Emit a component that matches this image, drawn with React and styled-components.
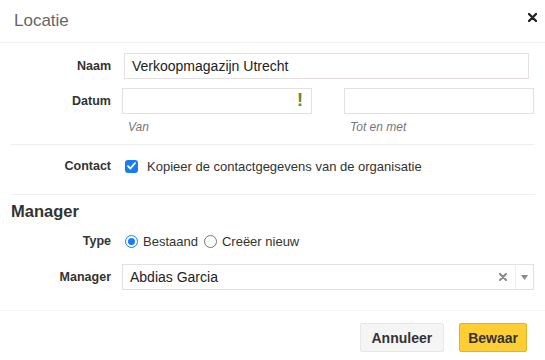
import React from "react";
import styled, { createGlobalStyle } from "styled-components";

const Global = createGlobalStyle`
  html, body { margin: 0; padding: 0; background: #fff; }
  body { font-family: "Liberation Sans", Arial, sans-serif; color: #333; }
  * { box-sizing: border-box; }
`;

const Modal = styled.div`
  width: 545px;
  height: 360px;
  background: #fff;
  display: flex;
  flex-direction: column;
`;

const Header = styled.div`
  height: 43px;
  border-bottom: 1px solid #f3f3f3;
  display: flex;
  align-items: center;
  justify-content: space-between;
  padding: 0 7px 0 14px;
`;

const Title = styled.h1`
  margin: 0;
  font-size: 17px;
  font-weight: normal;
  color: #666;
`;

const Close = styled.button`
  border: 0;
  background: none;
  padding: 0;
  width: 12px;
  height: 12px;
  margin-bottom: 7px;
  display: flex;
  align-items: center;
  justify-content: center;
  cursor: pointer;
`;

const Body = styled.div`
  padding: 10px 10px 0 11px;
  display: flex;
  flex-direction: column;
`;

const Row = styled.div`
  display: grid;
  grid-template-columns: 100px 1fr;
  column-gap: 11px;
  align-items: ${(p) => p.$align || "center"};
  margin-top: ${(p) => p.$mt || 0}px;
`;

const Label = styled.label`
  text-align: right;
  font-size: 12.5px;
  font-weight: bold;
  color: #333;
  line-height: ${(p) => p.$lh || 20}px;
`;

const TextInput = styled.div`
  height: 26px;
  border: 1px solid #e6e0e3;
  background: #fff;
  font-size: 14px;
  color: #222;
  display: flex;
  align-items: center;
  padding-left: ${(p) => p.$pl || 7}px;
  margin: ${(p) => p.$margin || "0"};
  position: relative;
`;

const DateGrid = styled.div`
  display: grid;
  grid-template-columns: 190px 190px;
  column-gap: 32px;
`;

const DateCol = styled.div`
  display: flex;
  flex-direction: column;
`;

const Help = styled.span`
  font-size: 12px;
  font-style: italic;
  color: #777;
  margin-top: 6px;
  padding-left: 6px;
  line-height: 14px;
`;

const Warn = styled.span`
  position: absolute;
  right: 8px;
  top: 1px;
  font-size: 18px;
  font-weight: bold;
  color: #5e8c1c;
  line-height: 20px;
`;

const Divider = styled.hr`
  border: 0;
  border-top: 1px solid #eeeeee;
  margin: ${(p) => p.$mt || 0}px 0 0 0;
`;

const Choice = styled.div`
  display: flex;
  align-items: center;
  font-size: 13px;
  color: #333;
  height: 20px;
`;

const Check = styled.span`
  width: 13px;
  height: 13px;
  border-radius: 3px;
  background: #1a7cf5;
  display: inline-flex;
  align-items: center;
  justify-content: center;
  margin-left: 3px;
  margin-right: 9px;
`;

const Radio = styled.span`
  width: 13px;
  height: 13px;
  border-radius: 50%;
  border: 1px solid #777;
  background: #fff;
  display: inline-block;
  margin-left: ${(p) => p.$ml || 0}px;
  margin-right: 5px;
`;

const RadioDot = styled.span`
  width: 13px;
  height: 13px;
  border-radius: 50%;
  border: 1px solid #1a7cf5;
  display: inline-flex;
  align-items: center;
  justify-content: center;
  margin-left: 3px;
  margin-right: 5px;
  &::after {
    content: "";
    width: 7px;
    height: 7px;
    border-radius: 50%;
    background: #1a7cf5;
  }
`;

const Section = styled.h2`
  margin: 6px 0 0 0;
  font-size: 16.5px;
  line-height: 20px;
  font-weight: bold;
  color: #333;
`;

const Select = styled.div`
  height: 26px;
  border: 1px solid #e3e0e2;
  display: flex;
  align-items: center;
  font-size: 14px;
  color: #222;
  margin-right: 1px;
`;

const SelectValue = styled.span`
  flex: 1;
  padding-left: 7px;
`;

const Clear = styled.span`
  width: 18px;
  display: flex;
  justify-content: center;
  margin-right: 3px;
`;

const Arrow = styled.span`
  width: 18px;
  height: 100%;
  border-left: 1px solid #eeeeee;
  display: flex;
  align-items: center;
  justify-content: center;
`;

const Footer = styled.div`
  margin-top: 20px;
  border-top: 1px solid #f4f4f4;
  padding: 12px 18px 0 0;
  display: flex;
  justify-content: flex-end;
  gap: 15px;
`;

const Button = styled.button`
  height: 29px;
  padding: 0 ${(p) => (p.$primary ? 8 : 11)}px;
  font-family: "Liberation Sans", Arial, sans-serif;
  font-size: 14px;
  font-weight: bold;
  color: #333;
  border-radius: 2px;
  border: 1px solid ${(p) => (p.$primary ? "#e3b326" : "#e8e6e8")};
  background: ${(p) => (p.$primary ? "#fecf35" : "#f6f5f6")};
`;

export default function App() {
  return (
    <>
      <Global />
      <Modal>
        <Header>
          <Title>Locatie</Title>
          <Close aria-label="Sluiten">
            <svg width="9" height="9" viewBox="0 0 9 9">
              <path d="M1 1L8 8M8 1L1 8" stroke="#222" strokeWidth="2.4" strokeLinecap="round" />
            </svg>
          </Close>
        </Header>
        <Body>
          <Row>
            <Label>Naam</Label>
            <TextInput $margin="0 6px 0 2px">Verkoopmagazijn Utrecht</TextInput>
          </Row>
          <Row $align="start" $mt={9}>
            <Label $lh={26}>Datum</Label>
            <DateGrid>
              <DateCol>
                <TextInput>
                  <Warn>!</Warn>
                </TextInput>
                <Help>Van</Help>
              </DateCol>
              <DateCol>
                <TextInput />
                <Help>Tot en met</Help>
              </DateCol>
            </DateGrid>
          </Row>
          <Divider $mt={10} />
          <Row $mt={11}>
            <Label>Contact</Label>
            <Choice>
              <Check>
                <svg width="9" height="8" viewBox="0 0 9 8">
                  <path d="M1 4.2L3.4 6.5L8 1.2" stroke="#fff" strokeWidth="1.8" fill="none" strokeLinecap="round" strokeLinejoin="round" />
                </svg>
              </Check>
              Kopieer de contactgegevens van de organisatie
            </Choice>
          </Row>
          <Divider $mt={18} />
          <Section>Manager</Section>
          <Row $mt={10}>
            <Label>Type</Label>
            <Choice>
              <RadioDot />
              Bestaand
              <Radio $ml={6} />
              Creëer nieuw
            </Choice>
          </Row>
          <Row $mt={13}>
            <Label>Manager</Label>
            <Select>
              <SelectValue>Abdias Garcia</SelectValue>
              <Clear>
                <svg width="8" height="8" viewBox="0 0 8 8">
                  <path d="M1 1L7 7M7 1L1 7" stroke="#888" strokeWidth="2" strokeLinecap="round" />
                </svg>
              </Clear>
              <Arrow>
                <svg width="7" height="5" viewBox="0 0 7 5">
                  <path d="M0 0H7L3.5 5Z" fill="#888" />
                </svg>
              </Arrow>
            </Select>
          </Row>
        </Body>
        <Footer>
          <Button>Annuleer</Button>
          <Button $primary>Bewaar</Button>
        </Footer>
      </Modal>
    </>
  );
}
